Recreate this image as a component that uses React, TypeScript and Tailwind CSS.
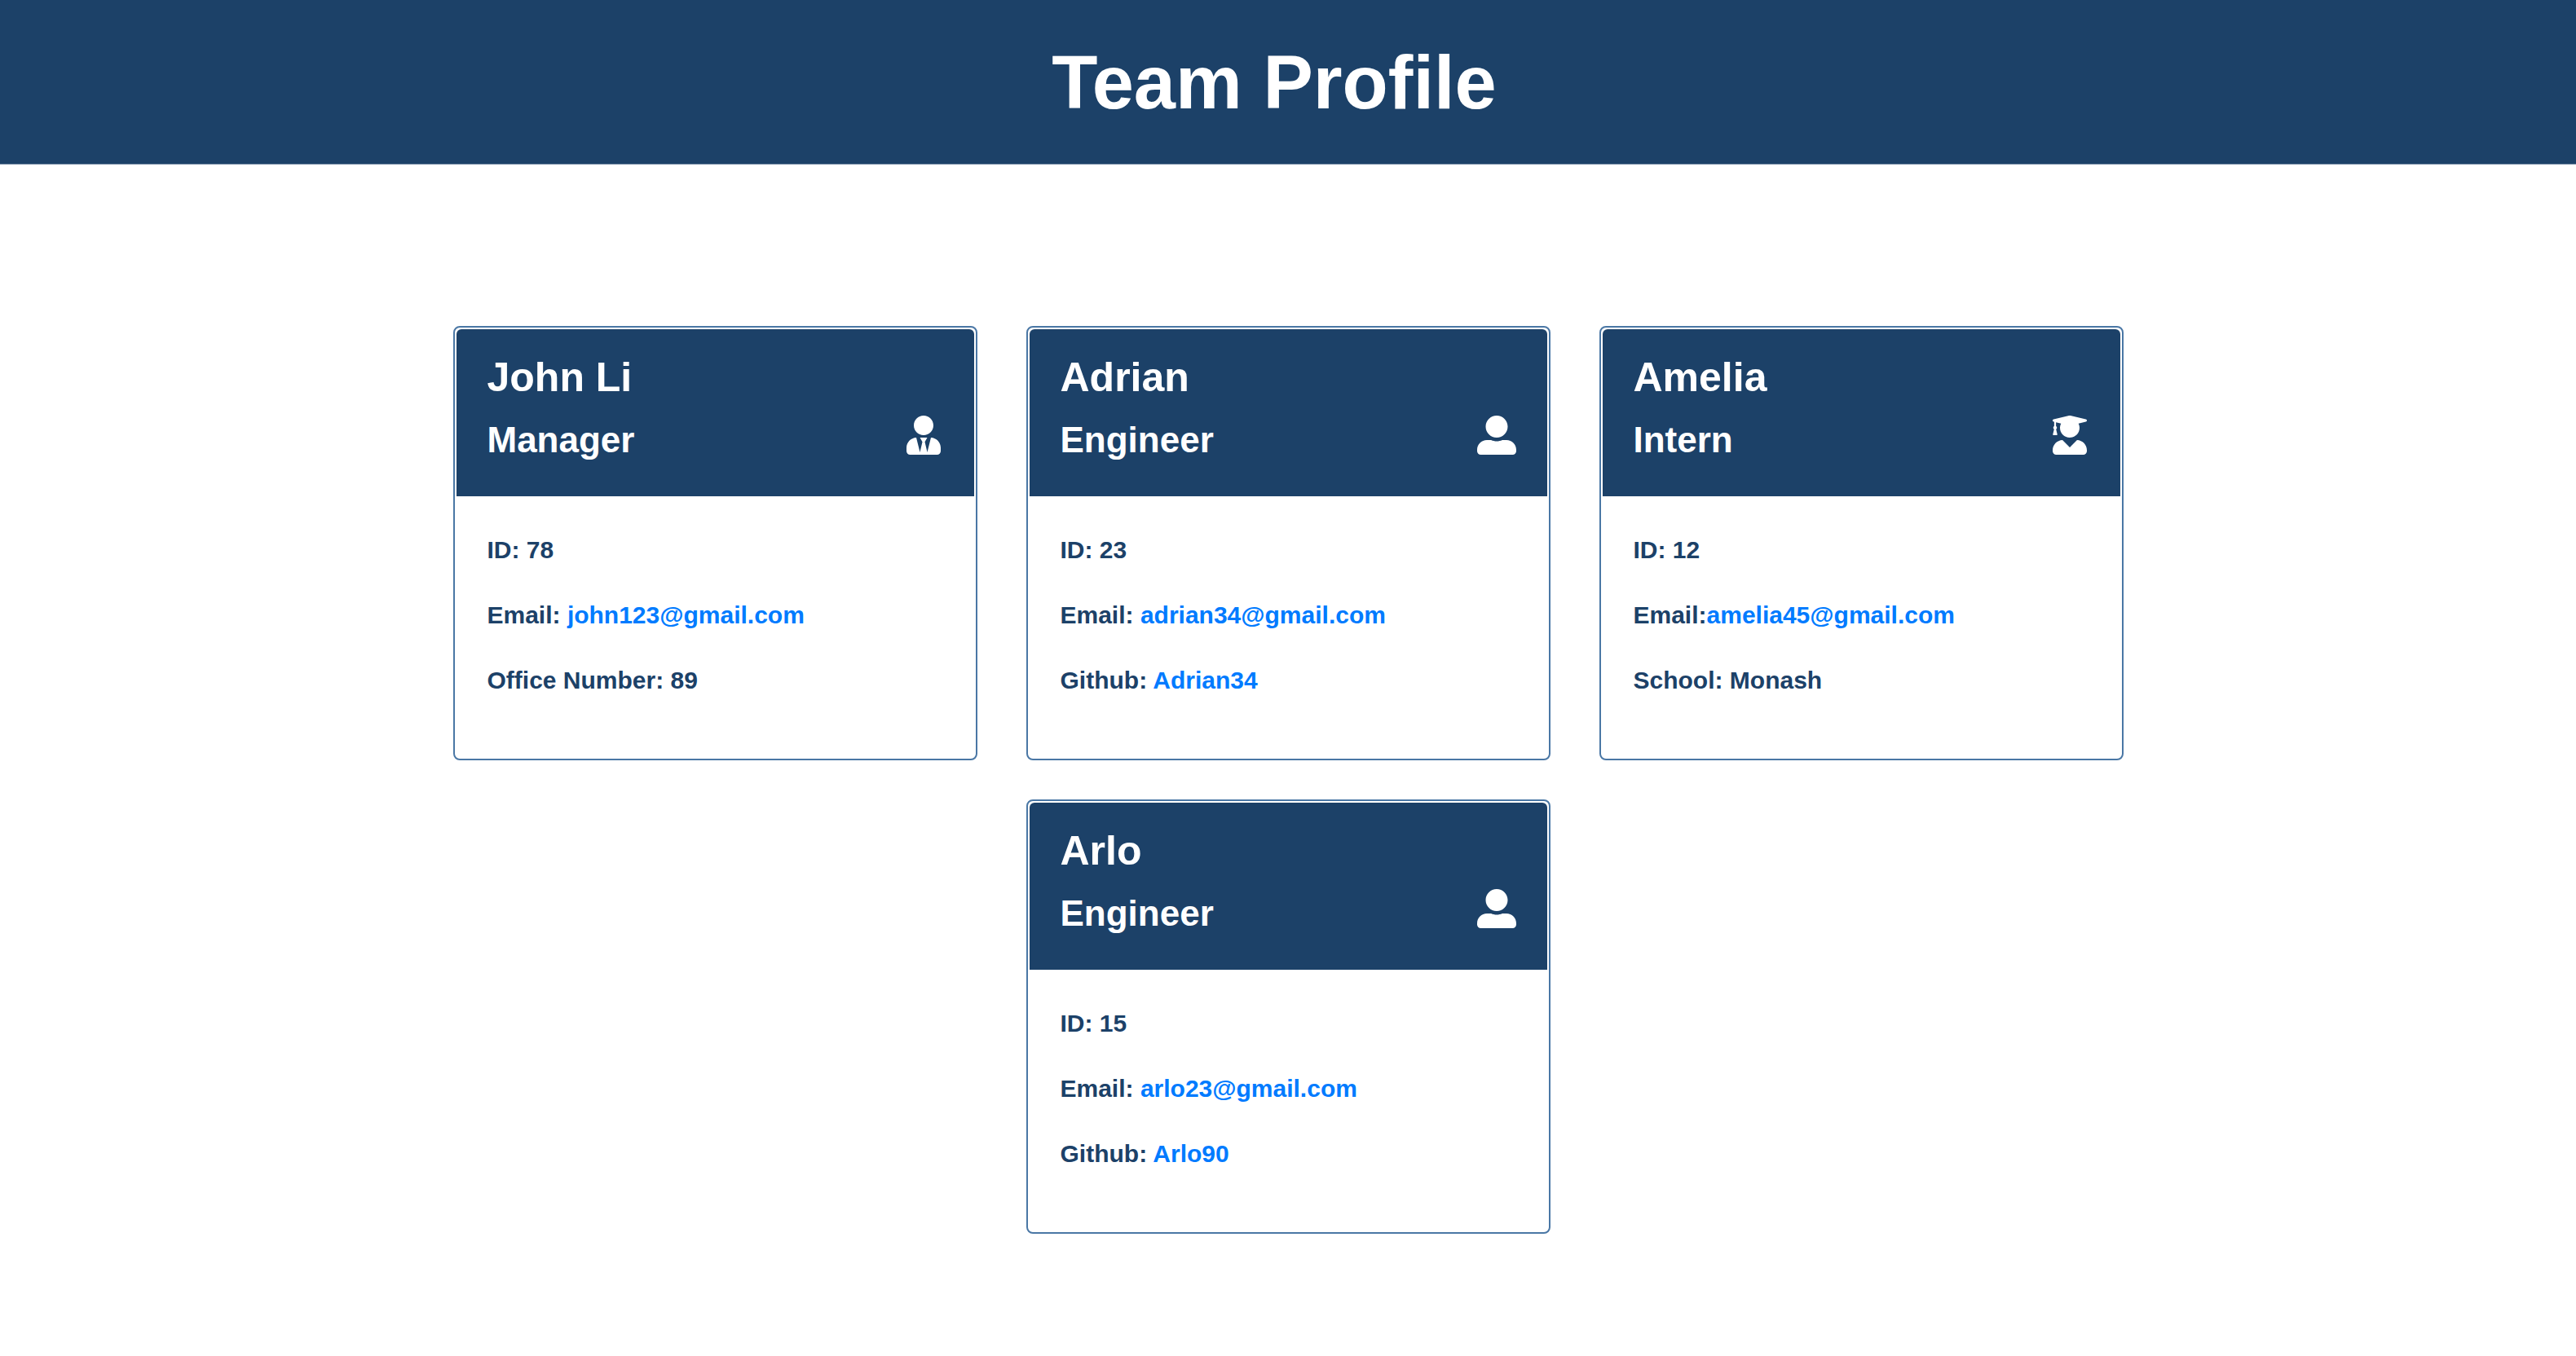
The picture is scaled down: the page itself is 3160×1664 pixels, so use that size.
import type { ReactNode } from "react";
import { FaUserAlt, FaUserGraduate, FaUserTie } from "react-icons/fa";
import type { IconType } from "react-icons";

type Member = {
  name: string;
  role: string;
  icon: IconType;
  id: number;
  email: string;
  emailLabel: string;
  extra: ReactNode;
};

function TextLink({ href, children }: { href: string; children: ReactNode }) {
  return (
    <a href={href} className="text-[#007bff] hover:underline">
      {children}
    </a>
  );
}

const members: Member[] = [
  {
    name: "John Li",
    role: "Manager",
    icon: FaUserTie,
    id: 78,
    email: "john123@gmail.com",
    emailLabel: "Email: ",
    extra: "Office Number: 89",
  },
  {
    name: "Adrian",
    role: "Engineer",
    icon: FaUserAlt,
    id: 23,
    email: "adrian34@gmail.com",
    emailLabel: "Email: ",
    extra: (
      <>
        Github: <TextLink href="https://github.com/Adrian34">Adrian34</TextLink>
      </>
    ),
  },
  {
    name: "Amelia",
    role: "Intern",
    icon: FaUserGraduate,
    id: 12,
    email: "amelia45@gmail.com",
    emailLabel: "Email:",
    extra: "School: Monash",
  },
  {
    name: "Arlo",
    role: "Engineer",
    icon: FaUserAlt,
    id: 15,
    email: "arlo23@gmail.com",
    emailLabel: "Email: ",
    extra: (
      <>
        Github: <TextLink href="https://github.com/Arlo90">Arlo90</TextLink>
      </>
    ),
  },
];

function MemberCard({ member }: { member: Member }) {
  const Icon = member.icon;
  return (
    <article className="w-full max-w-[643px] rounded-lg border-2 border-[#4a77a5] bg-white p-0.5">
      <header className="flex items-end justify-between rounded-t-md bg-[#1c4168] px-[38px] pt-[29px] pb-[42px] text-white">
        <div>
          <h2 className="text-[50px] leading-[60px]">{member.name}</h2>
          <h3 className="mt-5 text-[44px] leading-[54px]">{member.role}</h3>
        </div>
        <Icon className="mb-[9px] h-12 w-auto" aria-hidden="true" />
      </header>
      <ul className="flex flex-col gap-10 px-[38px] pt-[46px] pb-[74px] text-[30px] leading-10 text-[#1c4168]">
        <li>ID: {member.id}</li>
        <li>
          {member.emailLabel}
          <TextLink href={`mailto:${member.email}`}>{member.email}</TextLink>
        </li>
        <li>{member.extra}</li>
      </ul>
    </article>
  );
}

export default function App() {
  return (
    <div className="min-h-screen bg-white font-['Franklin_Gothic_Medium','Liberation_Sans',Arial,sans-serif] font-bold">
      <header className="border-b border-[#8296ae] bg-[#1c4168] pt-[41px] pr-[34px] pb-10 text-center text-white">
        <h1 className="text-[92px] leading-[120px]">Team Profile</h1>
      </header>
      <main className="mx-auto mt-[198px] flex max-w-[2049px] flex-wrap justify-center gap-x-[60px] gap-y-12">
        {members.map((member) => (
          <MemberCard key={member.name} member={member} />
        ))}
      </main>
    </div>
  );
}
